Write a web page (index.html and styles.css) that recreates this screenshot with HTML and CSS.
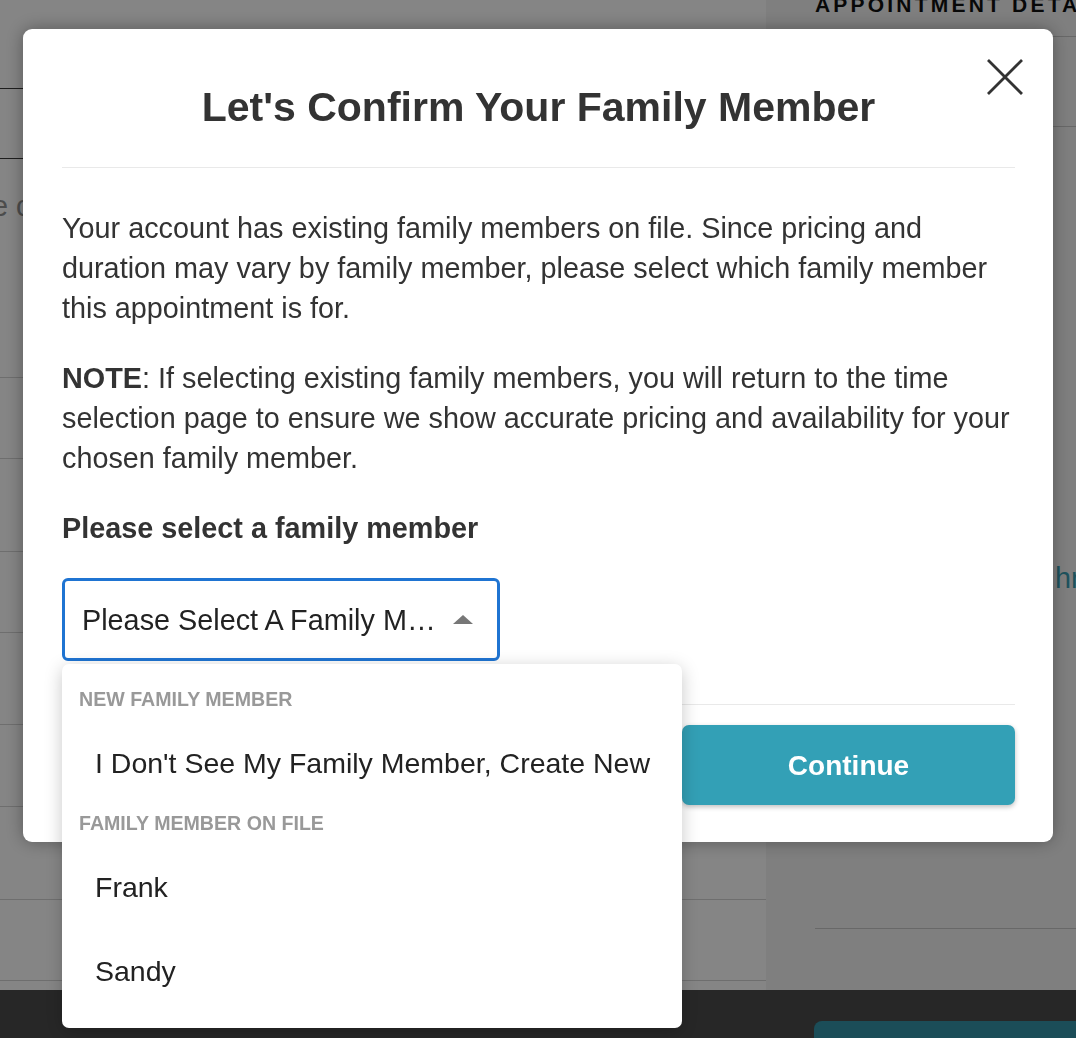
FILE: index.html
```html
<!DOCTYPE html>
<html lang="en">
<head>
<meta charset="utf-8">
<title>Let's Confirm Your Family Member</title>
<link rel="stylesheet" href="styles.css">
</head>
<body>
<div class="page">
  <div class="cols">
    <main class="left">
      <div class="row row-a dark"></div>
      <div class="row row-b dark"></div>
      <div class="row row-c"><p class="cut-text">Please choose a service</p></div>
      <div class="row row-d"></div>
      <div class="row row-e"></div>
      <div class="row row-d"></div>
      <div class="row row-f"></div>
      <div class="row row-g"></div>
      <div class="row row-e"></div>
      <div class="row row-d"></div>
    </main>
    <aside class="right">
      <h2 class="side-title">APPOINTMENT DETAILS</h2>
      <div class="side-block"></div>
      <div class="side-dur">hrs</div>
      <div class="side-total"></div>
    </aside>
  </div>
  <footer class="bottom">
    <div class="bottom-spacer"></div>
    <div class="bottom-right"><div class="bottom-btn"></div></div>
  </footer>
</div>

<div class="overlay">
  <div class="modal">
    <button class="close" aria-label="Close">
      <svg width="36" height="36" viewBox="0 0 36 36"><path d="M1 1 L35 35 M35 1 L1 35" stroke="#333" stroke-width="2.8" fill="none"/></svg>
    </button>
    <header class="modal-head">
      <h1 class="modal-title">Let's Confirm Your Family Member</h1>
    </header>
    <section class="modal-body">
      <p>Your account has existing family members on file. Since pricing and duration may vary by family member, please select which family member this appointment is for.</p>
      <p><strong>NOTE</strong>: If selecting existing family members, you will return to the time selection page to ensure we show accurate pricing and availability for your chosen family member.</p>
      <p class="label">Please select a family member</p>
      <div class="select-wrap">
        <div class="select">
          <span class="select-text">Please Select A Family Member</span>
          <span class="caret"></span>
        </div>
        <div class="menu">
          <div class="menu-group">New Family Member</div>
          <div class="menu-item">I Don't See My Family Member, Create New</div>
          <div class="menu-group">Family Member On File</div>
          <div class="menu-item">Frank</div>
          <div class="menu-item">Sandy</div>
        </div>
      </div>
    </section>
    <footer class="modal-foot">
      <button class="btn-continue">Continue</button>
    </footer>
  </div>
</div>
</body>
</html>
```

FILE: styles.css
```css
* { box-sizing: border-box; }

html, body {
  margin: 0;
  padding: 0;
  height: 100%;
  overflow: hidden;
}

body {
  font-family: "Liberation Sans", Arial, Helvetica, sans-serif;
  color: #333;
  background: #fff;
}

/* ---------- background page ---------- */
.page {
  height: 1038px;
  display: flex;
  flex-direction: column;
}

.cols {
  display: grid;
  grid-template-columns: 766px 1fr;
  height: 990px;
  flex: 0 0 990px;
}

.left {
  background: #fff;
  overflow: hidden;
}

.row {
  border-bottom: 1px solid #d4d4d4;
}
.row.dark { border-bottom-color: #3a3a3a; }
.row-a { height: 89px; }
.row-b { height: 70px; }
.row-c { height: 219px; padding-top: 27px; }
.row-d { height: 81px; }
.row-e { height: 93px; }
.row-f { height: 92px; }
.row-g { height: 82px; }

.cut-text {
  margin: 0;
  font-size: 28.8px;
  line-height: 40px;
  color: #929292;
  text-indent: -80px;
  white-space: nowrap;
}

.right {
  background: #f4f4f4;
  overflow: hidden;
  padding-left: 49px;
}

.side-title {
  margin: -6px 0 0;
  font-size: 21px;
  line-height: 21px;
  font-weight: 700;
  letter-spacing: 3.2px;
  color: #111;
  white-space: nowrap;
}

.side-block {
  margin-top: 21px;
  height: 91px;
  border-top: 1px solid #c8c8c8;
  border-bottom: 1px solid #c8c8c8;
}

.side-dur {
  margin-top: 431px;
  padding-left: 240px;
  font-size: 28.8px;
  line-height: 40px;
  color: #3a9fb3;
  white-space: nowrap;
}

.side-total {
  margin-top: 330px;
  border-bottom: 1px solid #c8c8c8;
}

.bottom {
  flex: 0 0 48px;
  min-height: 0;
  overflow: hidden;
  background: #4b4b4b;
  display: grid;
  grid-template-columns: 766px 1fr;
}

.bottom-right {
  padding: 31px 0 0 48px;
}

.bottom-btn {
  height: 40px;
  background: #3494a9;
  border-radius: 8px 0 0 0;
}

/* ---------- overlay & modal ---------- */
.overlay {
  position: fixed;
  inset: 0;
  background: rgba(0, 0, 0, 0.48);
  padding: 29px 23px;
}

.modal {
  position: relative;
  width: 1030px;
  background: #fff;
  border-radius: 9px;
  padding: 0 38px 37px 39px;
  box-shadow: 0 0 18px rgba(0, 0, 0, 0.35);
}

.close {
  position: absolute;
  top: 30px;
  right: 30px;
  width: 36px;
  height: 36px;
  padding: 0;
  border: 0;
  background: none;
  display: block;
}
.close svg { display: block; }

.modal-head {
  padding: 54px 0 36px;
  border-bottom: 1px solid #e9e9e9;
}

.modal-title {
  margin: 0;
  text-align: center;
  font-size: 41px;
  line-height: 48px;
  font-weight: 700;
  color: #333;
}

.modal-body {
  padding: 40px 0 43px;
  font-size: 28.8px;
  line-height: 40px;
  color: #333;
}

.modal-body p {
  margin: 0 0 30px;
}

.modal-body p.label {
  font-weight: 700;
}

.select-wrap {
  position: relative;
  width: 438px;
}

.select {
  height: 83px;
  border: 3px solid #1f74d2;
  border-radius: 6px;
  display: flex;
  align-items: center;
  padding: 0 24px 0 17px;
  color: #222;
}

.select-text {
  flex: 1;
  min-width: 0;
  white-space: nowrap;
  overflow: hidden;
  text-overflow: ellipsis;
  margin-right: 10px;
}

.caret {
  width: 0;
  height: 0;
  border-left: 10px solid transparent;
  border-right: 10px solid transparent;
  border-bottom: 9px solid #777;
}

.menu {
  position: absolute;
  top: 86px;
  left: 0;
  width: 620px;
  background: #fff;
  border-radius: 7px;
  padding: 15px 0 17px;
  box-shadow: 0 4px 18px rgba(0, 0, 0, 0.22);
  z-index: 5;
}

.menu-group {
  height: 40px;
  display: flex;
  align-items: center;
  padding-left: 17px;
  font-size: 19.6px;
  font-weight: 700;
  text-transform: uppercase;
  color: #999;
}

.menu-item {
  height: 84px;
  display: flex;
  align-items: center;
  padding: 4px 0 0 33px;
  font-size: 28.5px;
  color: #222;
}

.modal-foot {
  border-top: 1px solid #e9e9e9;
  padding-top: 20px;
  display: flex;
  justify-content: flex-end;
}

.btn-continue {
  width: 333px;
  height: 80px;
  border: 0;
  border-radius: 7px;
  background: #33a0b6;
  color: #fff;
  font-family: "Liberation Sans", Arial, Helvetica, sans-serif;
  font-size: 28px;
  font-weight: 700;
  padding-top: 2px;
  box-shadow: 0 2px 5px rgba(0, 0, 0, 0.25);
}
```
